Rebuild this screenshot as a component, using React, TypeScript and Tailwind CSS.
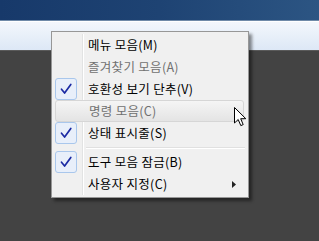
import React from "react";

const font = { fontFamily: '"Noto Sans CJK KR", "Noto Sans", sans-serif' };

function Check() {
  return (
    <div className="w-[22px] h-[22px] rounded-[3px] border border-[#a9c7ec] bg-[#e8effa] flex items-center justify-center">
      <svg width="12" height="12" viewBox="0 0 12 12">
        <path d="M1.5 6.2 L4.6 10 L10.8 1.5" fill="none" stroke="#1b2aa3" strokeWidth="1.7" strokeLinejoin="round" strokeLinecap="round" />
      </svg>
    </div>
  );
}

function Row({ label, checked, disabled, hover, sub }: { label: string; checked?: boolean; disabled?: boolean; hover?: boolean; sub?: boolean }) {
  return (
    <div
      className={
        "relative flex items-center h-[22px] " +
        (hover ? "mx-[1px] mr-[2px] rounded-[3px] border border-[#d6d6d6] bg-gradient-to-b from-[#f5f5f5] to-[#e4e4e4]" : "")
      }
    >
      <div className={hover ? "w-[22px] h-[20px]" : "ml-[1px] w-[22px] h-[22px]"}>{checked ? <Check /> : null}</div>
      <span
        className={"ml-[11px] text-[12.5px] tracking-[0.3px] leading-none " + (disabled ? "text-[#707070]" : "text-black")}
        style={font}
      >
        {label}
      </span>
      {sub ? (
        <svg className="absolute right-[10px] top-[8px]" width="4" height="7" viewBox="0 0 4 7">
          <path d="M0 0 L4 3.5 L0 7 Z" fill="#222" />
        </svg>
      ) : null}
    </div>
  );
}

export default function App() {
  return (
    <div className="relative w-[319px] h-[241px] overflow-hidden bg-[#434343]">
      <div className="h-[20px] bg-gradient-to-r from-[#17396a] via-[#1e4373] to-[#2c5583]" />
      <div className="h-[1px] bg-[#6f8aa8]" />
      <div className="h-[1px] bg-[#ffffff]" />
      <div className="h-[28px] bg-gradient-to-b from-[#f3f7fc] to-[#dde8f6]" />
      <div className="h-[1px] bg-[#5a5a5a]" />

      <div className="absolute left-[51px] top-[31px] w-[198px] border border-[#979797] bg-[#f0f0f0] p-[2px] shadow-[3px_3px_3px_rgba(0,0,0,0.45)]">
        <div className="absolute left-[30px] top-[2px] bottom-[2px] w-[1px] bg-[#e2e3e3]" />
        <div className="absolute left-[31px] top-[2px] bottom-[2px] w-[1px] bg-white" />
        <Row label="메뉴 모음(M)" />
        <Row label="즐겨찾기 모음(A)" disabled />
        <Row label="호환성 보기 단추(V)" checked />
        <Row label="명령 모음(C)" disabled hover />
        <Row label="상태 표시줄(S)" checked />
        <div className="relative h-[7px]">
          <div className="absolute left-[32px] right-[1px] top-[3px] h-[1px] bg-[#e0e0e0]" />
          <div className="absolute left-[32px] right-[1px] top-[4px] h-[1px] bg-white" />
        </div>
        <Row label="도구 모음 잠금(B)" checked />
        <Row label="사용자 지정(C)" sub />
      </div>

      <svg className="absolute left-[234px] top-[107px]" width="13" height="20" viewBox="0 0 13 20">
        <path d="M0.5 0.5 L0.5 16 L4.2 12.5 L6.8 18.6 L9.2 17.6 L6.7 11.7 L11.8 11.7 Z" fill="#fff" stroke="#000" strokeWidth="1" strokeLinejoin="round" />
      </svg>
    </div>
  );
}
